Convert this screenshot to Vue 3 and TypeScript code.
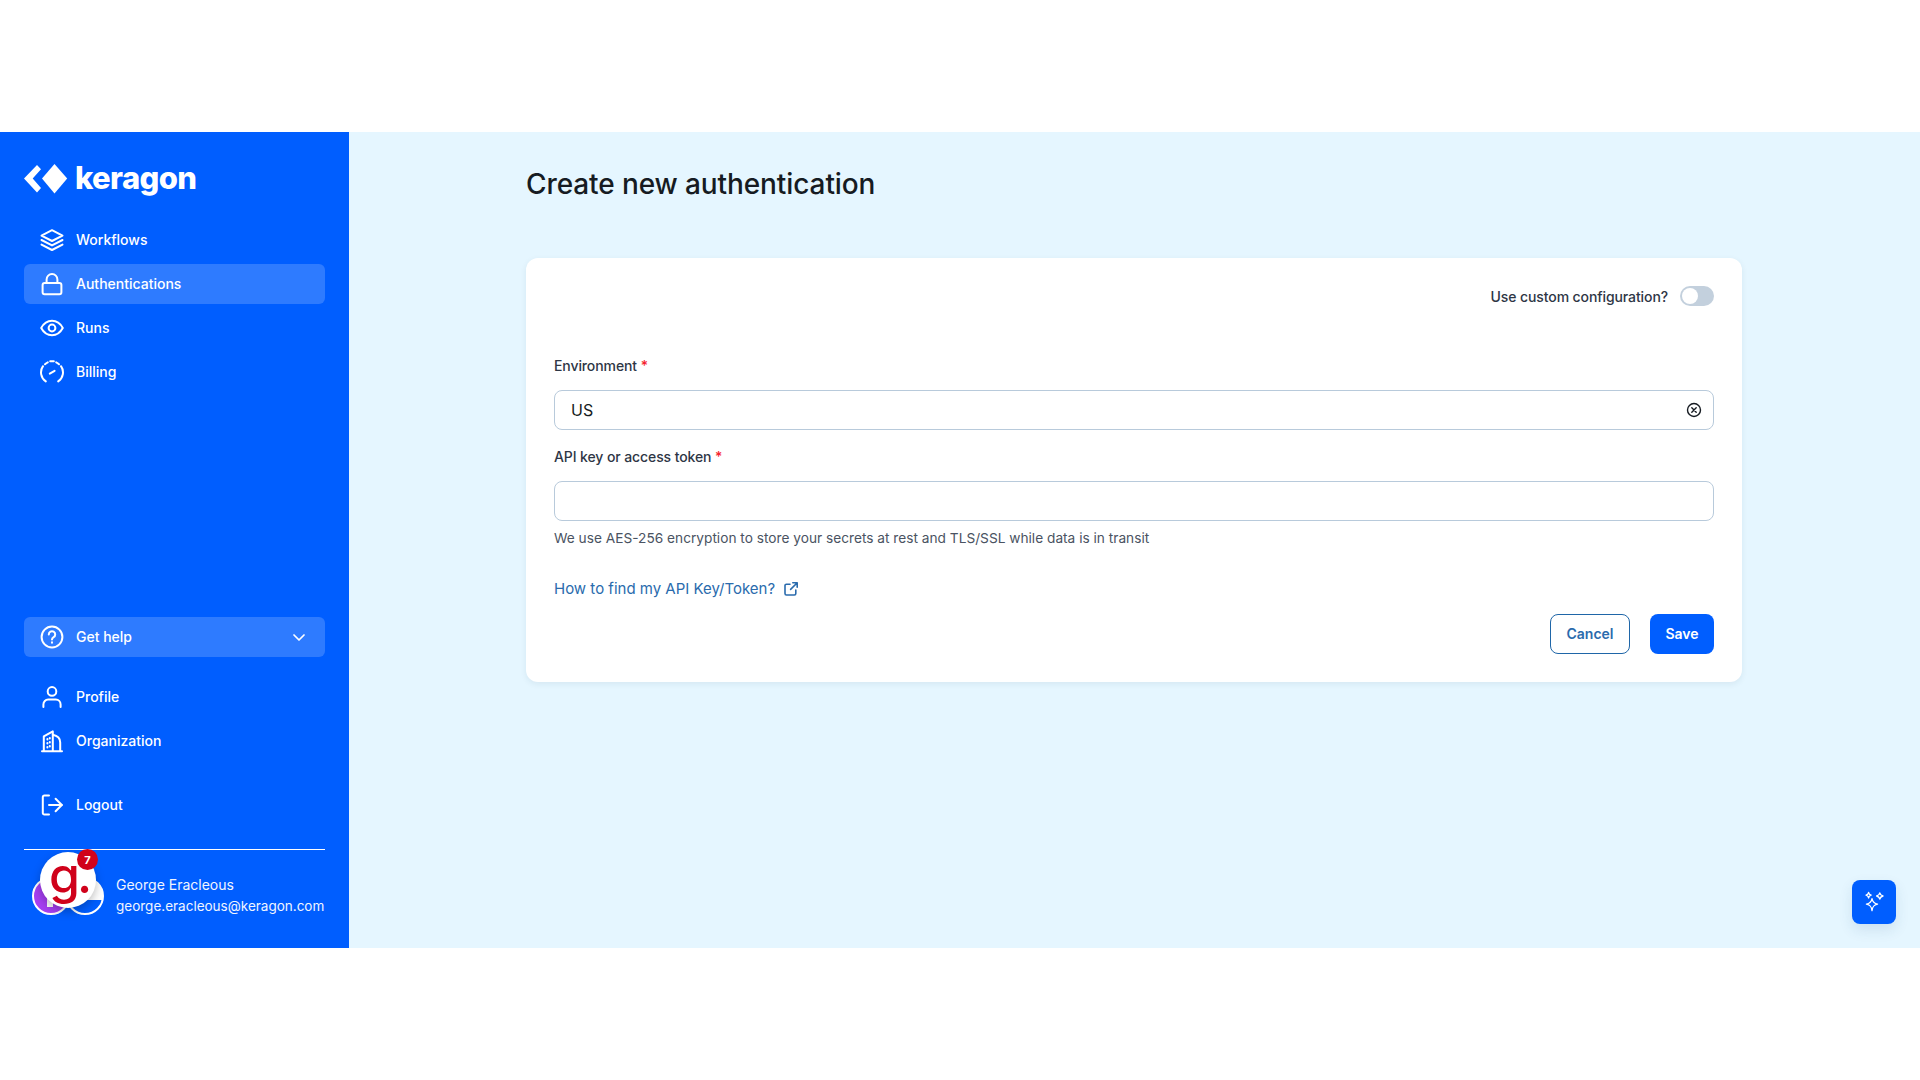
<script setup lang="ts">
interface NavItem { label: string; icon: string; active?: boolean }
const topNav: NavItem[] = [
  { label: 'Workflows', icon: 'layers' },
  { label: 'Authentications', icon: 'lock', active: true },
  { label: 'Runs', icon: 'eye' },
  { label: 'Billing', icon: 'gauge' },
]
</script>

<template>
  <div class="page">
    <div class="app">
      <aside class="sidebar">
        <div class="logo">
          <svg class="logo-mark" width="44" height="30" viewBox="0 0 44 30">
            <path d="M0 14.500 13 1 17 5.200 8.700 14.500 17 24 13 28.500Z" fill="#fff" />
            <path d="M30.500 0 43.200 14.500 30.500 29.500 18 14.500Z" fill="#fff" />
          </svg>
          <span class="logo-text">keragon</span>
        </div>

        <nav class="nav">
          <a v-for="item in topNav" :key="item.label" class="nav-item" :class="{ active: item.active }">
            <svg class="icon" viewBox="0 0 24 24">
              <template v-if="item.icon === 'layers'">
                <path d="M12 2.200 22.500 7.600 12 13 1.500 7.600Z" />
                <path d="M1.500 12 12 17.400 22.500 12" />
                <path d="M1.500 16.600 12 22 22.500 16.600" />
              </template>
              <template v-else-if="item.icon === 'lock'">
                <rect x="2.600" y="11" width="18.800" height="11.200" rx="2" />
                <path d="M6.600 11V7.400a5.400 5.400 0 0 1 10.800 0V11" />
              </template>
              <template v-else-if="item.icon === 'eye'">
                <path d="M1.200 12C3.800 7.200 7.600 4.800 12 4.800S20.200 7.200 22.800 12C20.200 16.800 16.400 19.200 12 19.200S3.800 16.800 1.200 12Z" />
                <circle cx="12" cy="12" r="3.400" />
              </template>
              <template v-else>
                <path d="M5.800 21.400A10.800 10.800 0 0 1 3 6.200" />
                <path d="M5 4.200A10.800 10.800 0 0 1 7.800 2.300" />
                <path d="M10.200 1.300H13.800" />
                <path d="M16.200 2.300A10.800 10.800 0 0 1 19 4.200" />
                <path d="M21 6.200A10.800 10.800 0 0 1 18.200 21.400" />
                <path d="M9.800 13.600 14.600 10.800" />
              </template>
            </svg>
            <span class="nav-label">{{ item.label }}</span>
          </a>
        </nav>

        <div class="bottom">
          <a class="nav-item active help">
            <svg class="icon" viewBox="0 0 24 24">
              <circle cx="12" cy="12" r="10.400" />
              <path d="M8.800 9.400a3.200 3.200 0 1 1 4.800 2.800c-1 .6-1.600 1.200-1.600 2.400" />
              <path d="M12 17.300v.4" />
            </svg>
            <span class="nav-label">Get help</span>
            <svg class="chev" width="12" height="7" viewBox="0 0 12 7">
              <path d="M1 1 6 6 11 1" />
            </svg>
          </a>

          <a class="nav-item profile">
            <svg class="icon" viewBox="0 0 24 24">
              <circle cx="12" cy="6.400" r="4.300" />
              <path d="M3.400 22v-2.600a4.800 4.800 0 0 1 4.800-4.800h7.600a4.800 4.800 0 0 1 4.800 4.800V22" />
            </svg>
            <span class="nav-label">Profile</span>
          </a>
          <a class="nav-item org">
            <svg class="icon" viewBox="0 0 24 24">
              <path d="M2 22.300H22" />
              <path d="M3.800 22V7.400L12.800 2.400V22" />
              <path d="M12.800 5.800C17.800 6.800 20.200 9.600 20.200 13.400V22" />
              <path d="M7.400 10v.6M7.400 14v.6M7.400 18v.6" />
              <path d="M9.800 9v.6M9.800 13v.6M9.800 17v.6" />
            </svg>
            <span class="nav-label">Organization</span>
          </a>
          <a class="nav-item logout">
            <svg class="icon" viewBox="0 0 24 24">
              <path d="M9 2.400H4.400a1.600 1.600 0 0 0-1.600 1.600v16a1.600 1.600 0 0 0 1.600 1.600H9" />
              <path d="M9 12H21.800" />
              <path d="M15.600 5.800 21.800 12 15.600 18.200" />
            </svg>
            <span class="nav-label">Logout</span>
          </a>

          <div class="user">
            <div class="avatars">
              <div class="av av-purple"><i class="glyph"></i></div>
              <div class="av av-white"></div>
              <div class="av-main"><span class="g">g.</span></div>
              <div class="badge">7</div>
            </div>
            <div class="user-text">
              <div>George Eracleous</div>
              <div class="email">george.eracleous@keragon.com</div>
            </div>
          </div>
        </div>
      </aside>

      <main class="main">
        <h1 class="title">Create new authentication</h1>

        <section class="card">
          <div class="toggle-row">
            <span>Use custom configuration?</span>
            <div class="toggle"><div class="knob"></div></div>
          </div>

          <label class="label first">Environment <b>*</b></label>
          <div class="input">
            <span>US</span>
            <svg width="16" height="16" viewBox="0 0 16 16" class="clear">
              <circle cx="8" cy="8" r="6.500" />
              <path d="M5.800 5.800 10.200 10.200M10.200 5.800 5.800 10.200" />
            </svg>
          </div>

          <label class="label second">API key or access token <b>*</b></label>
          <div class="input"></div>
          <p class="hint">We use AES-256 encryption to store your secrets at rest and TLS/SSL while data is in transit</p>

          <a class="link">
            <span>How to find my API Key/Token?</span>
            <svg width="16" height="16" viewBox="0 0 16 16">
              <path d="M7 3.200H3.400a1.400 1.400 0 0 0-1.400 1.400v8a1.400 1.400 0 0 0 1.400 1.400h8a1.400 1.400 0 0 0 1.400-1.400V9" />
              <path d="M7.600 8.400 14 2M9.800 1.800H14.200V6.200" />
            </svg>
          </a>

          <div class="actions">
            <button class="btn cancel">Cancel</button>
            <button class="btn save">Save</button>
          </div>
        </section>

        <button class="ai">
          <svg width="22" height="22" viewBox="0 0 22 22">
            <path d="M9 7.600C9.600 11 10.800 12.400 14.600 13.200 10.800 14 9.600 15.400 9 19.600 8.400 15.400 7.200 14 3.400 13.200 7.200 12.400 8.400 11 9 7.600Z" />
            <path d="M5.600 1.400C5.900 3.200 6.400 3.800 8.200 4.200 6.400 4.600 5.900 5.200 5.600 7 5.300 5.200 4.800 4.600 3 4.200 4.800 3.800 5.300 3.200 5.600 1.400Z" />
            <path d="M16.800 1.800C17.200 3.800 17.800 4.500 20 5 17.800 5.500 17.200 6.200 16.800 8.200 16.400 6.200 15.800 5.500 13.600 5 15.800 4.500 16.400 3.800 16.800 1.800Z" />
          </svg>
        </button>
      </main>
    </div>
  </div>
</template>

<style>
html, body { margin: 0; background: #fff; }
</style>

<style scoped>
* { box-sizing: border-box; }
.page {
  width: 1920px;
  height: 1080px;
  padding-top: 132px;
  font-family: Inter, "Liberation Sans", sans-serif;
  overflow: hidden;
}
.app { display: flex; height: 816px; }

.sidebar {
  width: 349px;
  flex: none;
  background: #005eff;
  padding: 32px 24px 0;
  display: flex;
  flex-direction: column;
  color: #fff;
}
.logo { display: flex; align-items: center; height: 30px; margin-bottom: 26px; }
.logo-mark { flex: none; }
.logo-text {
  margin-left: 7px;
  font-size: 31px;
  font-weight: 800;
  line-height: 30px;
  letter-spacing: -0.6px;
  position: relative;
  top: -1px;
}
.nav { display: flex; flex-direction: column; gap: 4px; }
.nav-item {
  height: 40px;
  display: flex;
  align-items: center;
  padding-left: 16px;
  border-radius: 6px;
  font-size: 14px;
  font-weight: 500;
  color: #fff;
}
.nav-label { padding-bottom: 2px; }
.nav-item.active { background: rgba(255, 255, 255, 0.18); }
.icon {
  width: 24px;
  height: 24px;
  margin-right: 12px;
  flex: none;
  fill: none;
  stroke: #fff;
  stroke-width: 2;
  stroke-linecap: round;
  stroke-linejoin: round;
}
.bottom { margin-top: auto; display: flex; flex-direction: column; }
.help { position: relative; }
.chev {
  margin-left: auto;
  margin-right: 20px;
  fill: none;
  stroke: #fff;
  stroke-width: 1.700;
  stroke-linecap: round;
  stroke-linejoin: round;
}
.profile { margin-top: 20px; }
.org { margin-top: 4px; }
.logout { margin-top: 24px; }
.user {
  margin-top: 24px;
  height: 99px;
  border-top: 1px solid #fff;
  display: flex;
  align-items: flex-start;
}
.avatars { position: relative; width: 92px; height: 70px; flex: none; }
.av {
  position: absolute;
  top: 27px;
  width: 38px;
  height: 38px;
  border-radius: 50%;
  border: 2px solid #fff;
  overflow: hidden;
}
.av-purple { left: 8px; background: #a63ff2; }
.glyph {
  position: absolute;
  left: 13px;
  top: 12px;
  width: 6px;
  height: 16px;
  background: #fff;
}
.av-white {
  left: 42px;
  background: linear-gradient(180deg, #fff 0 62%, #005eff 62%);
}
.av-main {
  position: absolute;
  left: 16px;
  top: 2px;
  width: 56px;
  height: 56px;
  border-radius: 50%;
  background: #fff;
  box-shadow: 0 4px 10px rgba(0, 0, 0, 0.25);
  display: flex;
  align-items: center;
  justify-content: center;
}
.g {
  color: #d0021b;
  font-family: Inter, sans-serif;
  font-size: 50px;
  font-weight: 500;
  line-height: 56px;
  letter-spacing: -3px;
  position: relative;
  top: -5px;
  left: 1px;
}
.badge {
  position: absolute;
  left: 53px;
  top: -1px;
  width: 21px;
  height: 21px;
  border-radius: 50%;
  background: #d0021b;
  color: #fff;
  font-size: 11px;
  font-weight: 700;
  display: flex;
  align-items: center;
  justify-content: center;
}
.user-text {
  padding-top: 24px;
  font-size: 14px;
  line-height: 21px;
  color: #f0f5ff;
  white-space: nowrap;
}
.email { font-size: 13.500px; margin-top: 1px; }

.main {
  flex: 1;
  position: relative;
  background: #e5f6ff;
  padding: 0 178px 0 177px;
}
.title {
  margin: 0;
  padding-top: 32px;
  height: 126px;
  font-size: 28px;
  line-height: 40px;
  font-weight: 500;
  letter-spacing: -0.1px;
  color: #161b22;
}
.card {
  height: 424px;
  background: #fff;
  border-radius: 12px;
  box-shadow: 0 2px 6px rgba(30, 60, 90, 0.08);
  padding: 28px;
  display: flex;
  flex-direction: column;
}
.toggle-row {
  display: flex;
  align-items: center;
  justify-content: flex-end;
  gap: 12px;
  height: 20px;
  font-size: 14px;
  font-weight: 500;
  letter-spacing: -0.1px;
  color: #2e3645;
}
.toggle {
  width: 34px;
  height: 20px;
  border-radius: 10px;
  background: #c3d0dd;
  padding: 2px;
}
.knob { width: 16px; height: 16px; border-radius: 50%; background: #fff; }
.label {
  font-size: 14px;
  line-height: 20px;
  font-weight: 500;
  letter-spacing: -0.1px;
  color: #2e3645;
}
.label b { color: #f5222d; font-weight: 500; }
.label.first { margin-top: 50px; margin-bottom: 14px; }
.label.second { margin-top: 17px; margin-bottom: 14px; }
.input {
  height: 40px;
  flex: none;
  border: 1px solid #b8cadb;
  border-radius: 8px;
  display: flex;
  align-items: center;
  justify-content: space-between;
  padding: 0 11px 0 16px;
  font-size: 16px;
  color: #161b22;
}
.clear { fill: none; stroke: #161b22; stroke-width: 1.400; stroke-linecap: round; }
.hint {
  margin: 7px 0 0;
  font-size: 13.700px;
  line-height: 20px;
  color: #4a5362;
}
.link {
  margin-top: 30px;
  display: flex;
  align-items: center;
  gap: 8px;
  height: 20px;
  font-size: 15px;
  color: #2a6bad;
}
.link svg { fill: none; stroke: #2a6bad; stroke-width: 1.600; stroke-linecap: round; stroke-linejoin: round; position: relative; top: 1px; }
.actions { margin-top: 16px; display: flex; justify-content: flex-end; gap: 20px; }
.btn {
  height: 40px;
  border-radius: 8px;
  font-family: inherit;
  font-size: 14px;
  font-weight: 600;
  padding: 0 0 1px;
}
.cancel { width: 80px; background: #fff; border: 1px solid #1f66a8; color: #2a6bad; }
.save { width: 64px; background: #005eff; border: none; color: #fff; }
.ai {
  position: absolute;
  left: 1503px;
  top: 748px;
  width: 44px;
  height: 44px;
  border: none;
  border-radius: 8px;
  background: #005eff;
  box-shadow: 0 6px 14px rgba(30, 80, 130, 0.12);
  display: flex;
  align-items: center;
  justify-content: center;
  padding: 0;
}
.ai svg { fill: none; stroke: #fff; stroke-width: 1.300; stroke-linejoin: round; }
</style>
